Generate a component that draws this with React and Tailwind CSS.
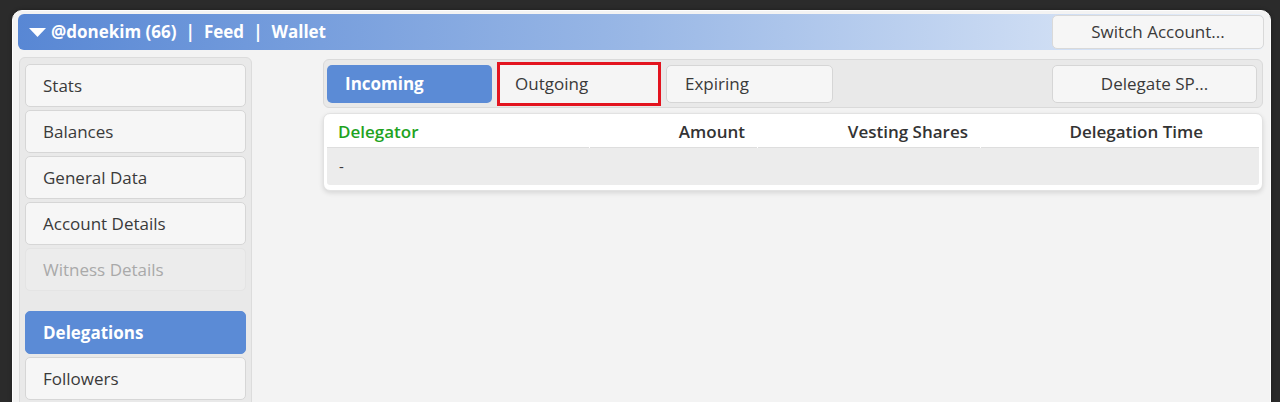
import React from "react";

const font = { fontFamily: '"Open Sans", "Noto Sans", sans-serif' };

function SideBtn({ label, active, disabled }) {
  let cls =
    "h-[43px] w-full rounded-[5px] border flex items-center pl-[17px] text-[17px] ";
  if (active) cls += "bg-[#5b8bd6] border-[#5b8bd6] text-white font-bold";
  else if (disabled) cls += "bg-[#ececec] border-[#e4e4e4] text-[#a9a9a9]";
  else cls += "bg-[#f6f6f6] border-[#d6d6d6] text-[#3a3a3a]";
  return <div className={cls}>{label}</div>;
}

export default function App() {
  return (
    <div style={font} className="w-full h-[402px] bg-[#2b2b2b] pt-[10px] pl-[12px] pr-[9px] overflow-hidden">
      <div className="h-[400px] rounded-t-[10px] bg-[#f3f3f3] border border-[#fdfdfd] pl-[5px] pr-[6px] pt-[3px] shadow-[0_0_4px_rgba(0,0,0,0.3)]">
        {/* header */}
        <div className="h-[36px] rounded-[6px] bg-gradient-to-r from-[#5887d4] via-[#9ab8e6] to-[#e9f0fa] flex items-center pl-[11px] pr-0 text-white font-bold text-[17px]">
          <svg width="17" height="10" viewBox="0 0 17 10" className="mr-[5px] mt-[2px]">
            <polygon points="0,0 17,0 8.5,9" fill="#ffffff" />
          </svg>
          <span>@donekim (66)</span>
          <span className="mx-[9px]">|</span>
          <span>Feed</span>
          <span className="mx-[9px]">|</span>
          <span>Wallet</span>
          <div className="ml-auto h-[34px] w-[212px] rounded-[5px] bg-[#f6f6f6] border border-[#d9d9d9] flex items-center justify-center text-[#3a3a3a] font-normal">
            Switch Account...
          </div>
        </div>

        <div className="flex mt-[7px]">
          {/* sidebar */}
          <div className="w-[233px] h-[360px] bg-[#e9e9e9] border border-[#dcdcdc] rounded-t-[6px] px-[5px] pt-[6px] flex flex-col gap-[3px] ml-[1px]">
            <SideBtn label="Stats" />
            <SideBtn label="Balances" />
            <SideBtn label="General Data" />
            <SideBtn label="Account Details" />
            <SideBtn label="Witness Details" disabled />
            <div className="h-[14px]" />
            <SideBtn label="Delegations" active />
            <SideBtn label="Followers" />
          </div>

          {/* content */}
          <div className="ml-[71px] w-[940px] flex flex-col gap-[5px] mt-[2px]">
            <div className="h-[49px] bg-[#e9e9e9] border border-[#dadada] rounded-[6px] flex items-center px-[3px] text-[17px]">
              <div className="h-[38px] w-[165px] rounded-[5px] bg-[#5b8bd6] text-white font-bold flex items-center pl-[18px] pt-[1px]">
                Incoming
              </div>
              <div className="ml-[5px] h-[44px] w-[164px] border-[3px] border-[#e3141f] bg-[#f5f5f5] text-[#3a3a3a] flex items-center pl-[15px] pt-[1px]">
                Outgoing
              </div>
              <div className="ml-[5px] h-[38px] w-[167px] rounded-[5px] bg-[#f6f6f6] border border-[#d6d6d6] text-[#3a3a3a] flex items-center pl-[18px] pt-[1px]">
                Expiring
              </div>
              <div className="ml-auto mr-[2px] h-[38px] w-[205px] rounded-[5px] bg-[#f6f6f6] border border-[#d6d6d6] text-[#3a3a3a] flex items-center justify-center pt-[1px]">
                Delegate SP...
              </div>
            </div>

            <div className="h-[78px] bg-white rounded-[7px] border border-[#e2e2e2] shadow-[0_2px_5px_rgba(0,0,0,0.12)] px-[3px] pt-[1px] text-[17px] font-semibold">
              <div className="flex h-[33px] items-center">
                <div className="w-[262px] h-full flex items-center pl-[11px] pt-[2px] text-[#1fa31f] border-b border-[#dedede] mr-[1px]">Delegator</div>
                <div className="w-[167px] h-full flex items-center justify-end pr-[12px] pt-[2px] text-[#333] border-b border-[#dedede] mr-[1px]">Amount</div>
                <div className="w-[222px] h-full flex items-center justify-end pr-[12px] pt-[2px] text-[#333] border-b border-[#dedede] mr-[1px]">Vesting Shares</div>
                <div className="flex-1 h-full flex items-center justify-end pr-[56px] pt-[2px] text-[#333] border-b border-[#dedede]">Delegation Time</div>
              </div>
              <div className="h-[37px] bg-[#ececec] rounded-b-[3px] flex items-center pl-[12px] text-[#3a3a3a] text-[15px] font-normal">
                -
              </div>
            </div>
          </div>
        </div>
      </div>
    </div>
  );
}
